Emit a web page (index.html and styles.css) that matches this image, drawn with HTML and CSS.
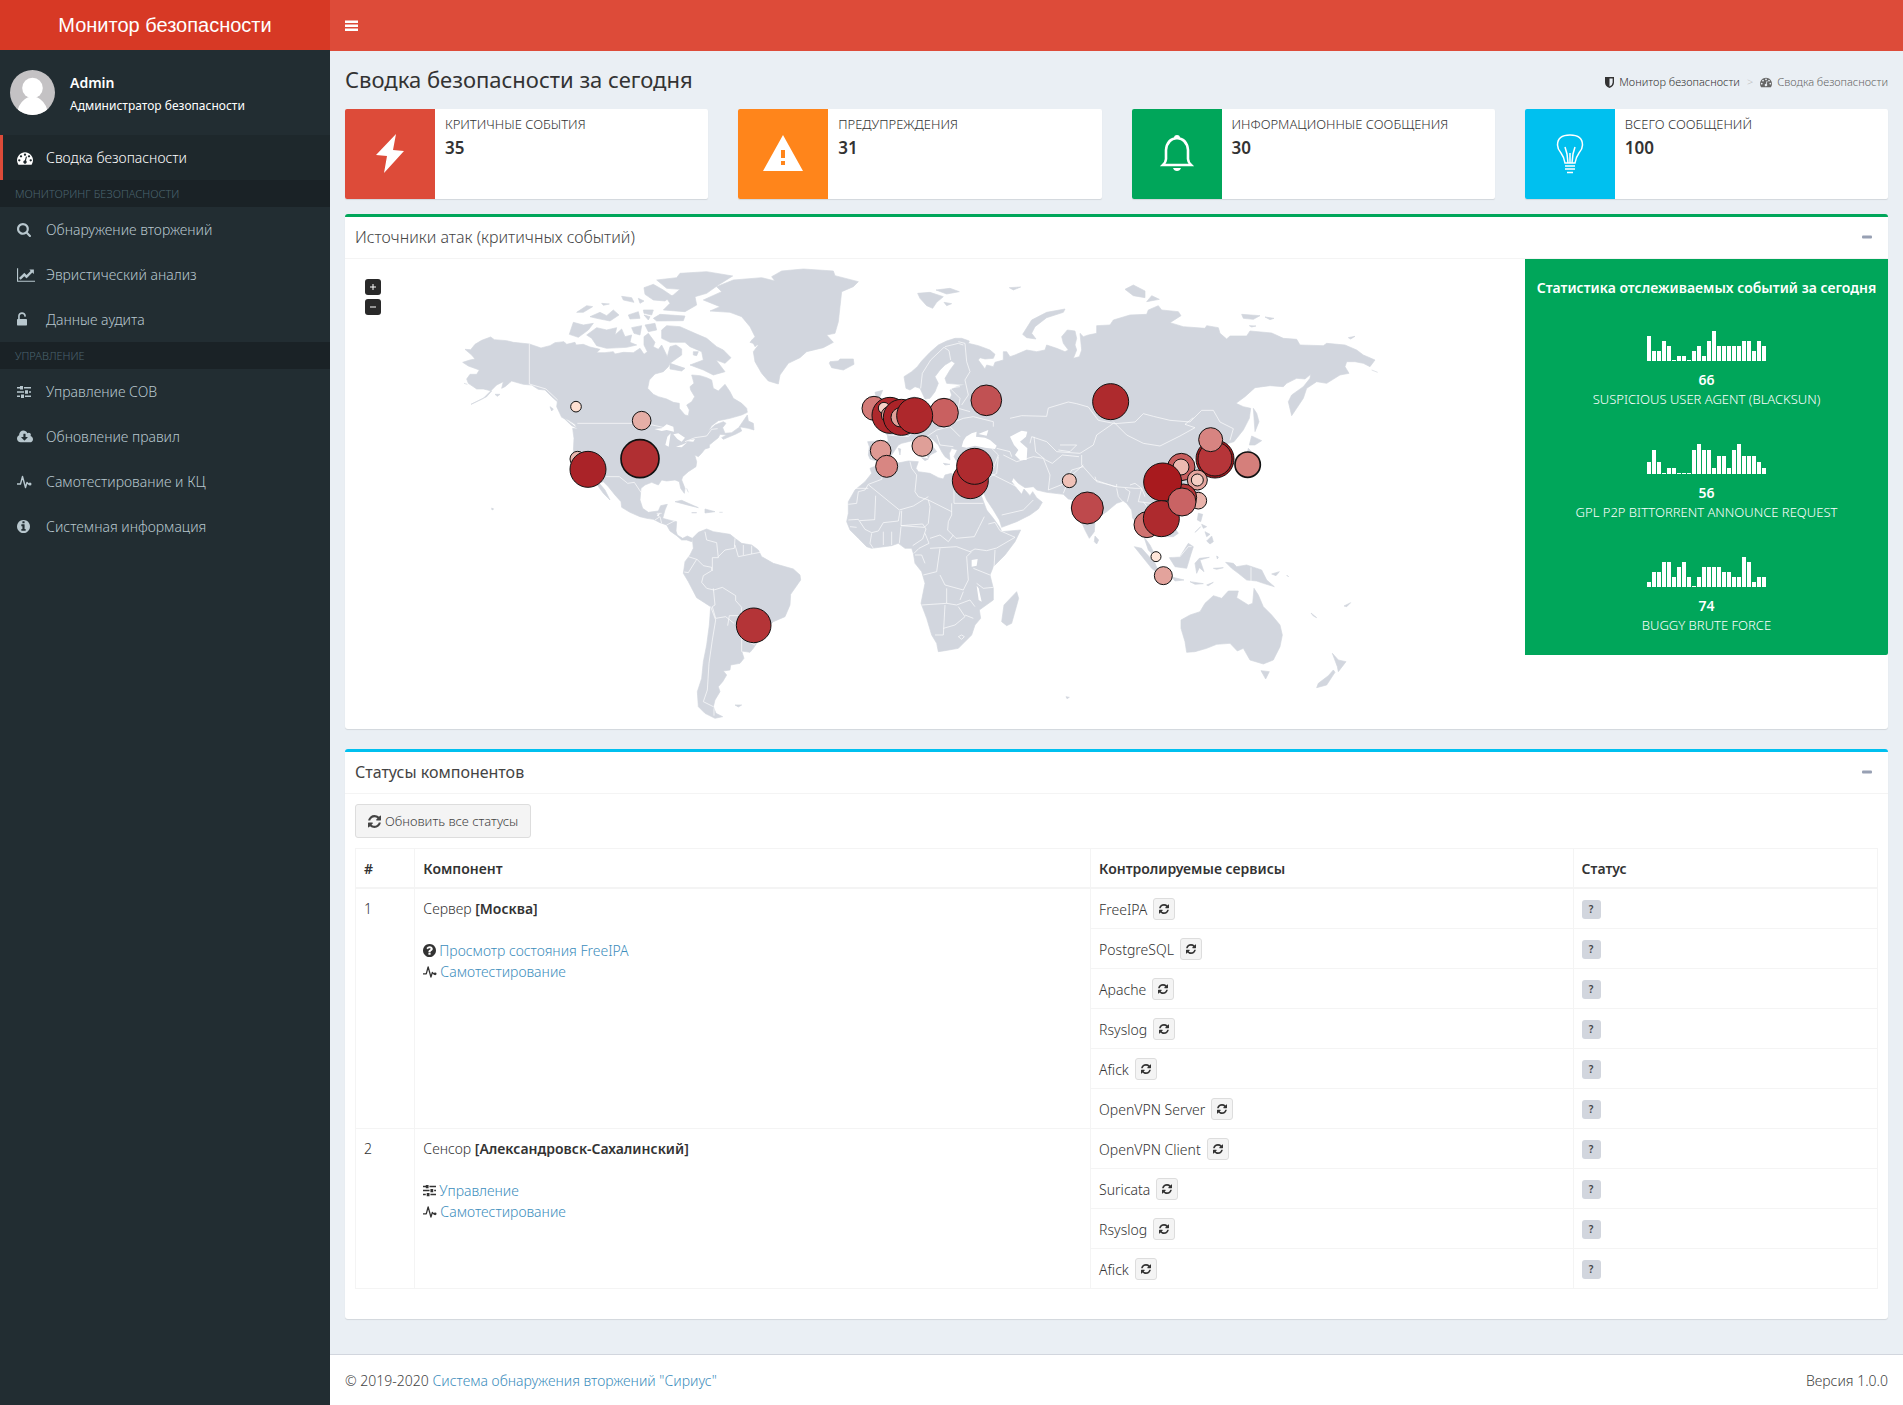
FILE: index.html
```html
<!DOCTYPE html>
<html lang="ru">
<head>
<meta charset="utf-8">
<title>Монитор безопасности</title>
<link rel="stylesheet" href="styles.css">
</head>
<body>
<svg class="sprite" aria-hidden="true">
  <symbol id="i-bars" viewBox="0 0 14 14"><path d="M0 1.500h13v2.500H0zM0 5.500h13V8H0zM0 9.500h13V12H0z"/></symbol>
  <symbol id="i-dash" viewBox="0 0 1792 1792"><path d="M384 1152q0-53-37.500-90.500t-90.500-37.500-90.500 37.500-37.500 90.500 37.500 90.500 90.500 37.500 90.500-37.500 37.500-90.500zm192-448q0-53-37.500-90.500t-90.500-37.500-90.500 37.500-37.500 90.500 37.500 90.500 90.500 37.500 90.500-37.500 37.500-90.500zm428 481l101-382q6-26-7.500-48.500t-38.500-29.500-48 6.500-30 39.500l-101 382q-60 5-107 43.500t-63 98.500q-20 77 20 146t117 89 146-20 89-117q16-60-6-117t-72-91zm660-33q0-53-37.500-90.500t-90.500-37.500-90.500 37.500-37.500 90.500 37.500 90.500 90.500 37.500 90.500-37.500 37.500-90.500zm-640-640q0-53-37.500-90.500t-90.500-37.500-90.500 37.500-37.500 90.500 37.500 90.500 90.500 37.500 90.500-37.500 37.500-90.500zm448 192q0-53-37.500-90.500t-90.500-37.500-90.500 37.500-37.500 90.500 37.500 90.500 90.500 37.500 90.500-37.500 37.500-90.500zm320 448q0 261-141 483-19 29-54 29h-1402q-35 0-54-29-141-221-141-483 0-182 71-348t191-286 286-191 348-71 348 71 286 191 191 286 71 348z"/></symbol>
  <symbol id="i-search" viewBox="64 128 1664 1664"><path d="M1216 832q0-185-131.500-316.500t-316.500-131.500-316.500 131.500-131.500 316.500 131.500 316.500 316.500 131.500 316.500-131.500 131.500-316.500zm512 832q0 52-38 90t-90 38q-54 0-90-38l-343-342q-179 124-399 124-143 0-273.500-55.500t-225-150-150-225-55.500-273.500 55.500-273.500 150-225 225-150 273.500-55.500 273.500 55.500 225 150 150 225 55.500 273.500q0 220-124 399l343 343q37 37 37 90z"/></symbol>
  <symbol id="i-chart" viewBox="0 0 2048 1792"><path d="M2048 1536v128h-2048v-1536h128v1408h1920zm-128-1248v435q0 21-19.500 29.500t-35.500-7.500l-121-121-633 633q-10 10-23 10t-23-10l-233-233-416 416-192-192 585-585q10-10 23-10t23 10l233 233 464-464-121-121q-16-16-7.500-35.500t29.500-19.500h435q14 0 23 9t9 23z"/></symbol>
  <symbol id="i-unlock" viewBox="320 0 1152 1792"><path d="M1376 768q40 0 68 28t28 68v576q0 40-28 68t-68 28h-960q-40 0-68-28t-28-68v-576q0-40 28-68t68-28h32v-320q0-185 131.500-316.500t316.500-131.500 316.500 131.500 131.500 316.500q0 26-19 45t-45 19h-64q-26 0-45-19t-19-45q0-106-75-181t-181-75-181 75-75 181v320h736z"/></symbol>
  <symbol id="i-sliders" viewBox="0 0 14 14"><path d="M0 2h3v1.500H0zM3 1h3v3.500H3zM7 2h7v1.500H7zM0 6.300h7v1.500H0zM8 5.300h3v3.500H8zM12 6.300h2v1.500h-2zM0 10.600h3v1.500H0zM4 9.600h3v3.500H4zM8 10.600h6v1.500H8z"/></symbol>
  <symbol id="i-cloud" viewBox="0 0 1920 1792"><path d="M1280 928q0-14-9-23t-23-9h-224v-352q0-13-9.500-22.500t-22.500-9.500h-192q-13 0-22.500 9.500t-9.500 22.500v352h-224q-13 0-22.500 9.500t-9.500 22.500q0 14 9 23l352 352q9 9 23 9t23-9l351-351q10-12 10-24zm640 224q0 159-112.500 271.500t-271.500 112.500h-1088q-185 0-316.500-131.500t-131.500-316.500q0-130 70-240t188-165q-2-30-2-43 0-212 150-362t362-150q156 0 285.500 87t188.500 231q71-62 166-62 106 0 181 75t75 181q0 76-41 138 130 31 213.500 135.500t83.500 238.500z"/></symbol>
  <symbol id="i-pulse" viewBox="0 0 15 14"><path d="M0 9h3.500L5.500 1.500 8.500 12.500 10 7.500 11.500 9H13" fill="none" stroke="currentColor" stroke-width="1.400" stroke-linejoin="round"/><circle cx="13" cy="9" r="1.500"/></symbol>
  <symbol id="i-info" viewBox="128 128 1536 1536"><path d="M1152 1376v-160q0-14-9-23t-23-9h-96v-512q0-14-9-23t-23-9h-320q-14 0-23 9t-9 23v160q0 14 9 23t23 9h96v320h-96q-14 0-23 9t-9 23v160q0 14 9 23t23 9h448q14 0 23-9t9-23zm-128-896v-160q0-14-9-23t-23-9h-192q-14 0-23 9t-9 23v160q0 14 9 23t23 9h192q14 0 23-9t9-23zm640 416q0 209-103 385.500t-279.500 279.500-385.500 103-385.500-103-279.500-279.500-103-385.500 103-385.500 279.500-279.500 385.500-103 385.500 103 279.500 279.500 103 385.500z"/></symbol>
  <symbol id="i-question" viewBox="128 128 1536 1536"><path d="M1024 1376v-192q0-14-9-23t-23-9h-192q-14 0-23 9t-9 23v192q0 14 9 23t23 9h192q14 0 23-9t9-23zm256-672q0-88-55.500-163t-138.500-116-170-41q-243 0-371 213-15 24 8 42l132 100q7 6 19 6 16 0 25-12 53-68 86-92 34-24 86-24 48 0 85.500 26t37.500 59q0 38-20 61t-68 45q-63 28-115.500 86.500t-52.500 125.500v36q0 14 9 23t23 9h192q14 0 23-9t9-23q0-19 21.500-49.500t54.500-49.500q32-18 49-28.500t46-35 44.500-48 28-60.500 12.500-81zm384 192q0 209-103 385.500t-279.500 279.500-385.500 103-385.500-103-279.500-279.500-103-385.500 103-385.500 279.500-279.500 385.500-103 385.500 103 279.500 279.500 103 385.500z"/></symbol>
  <symbol id="i-refresh" viewBox="128 128 1536 1536"><path d="M1639 1056q0 5-1 7-64 268-268 434.500t-478 166.500q-146 0-282.500-55t-243.500-157l-129 129q-19 19-45 19t-45-19-19-45v-448q0-26 19-45t45-19h448q26 0 45 19t19 45-19 45l-137 137q71 66 161 102t187 36q134 0 250-65t186-179q11-17 53-117 8-23 30-23h192q13 0 22.500 9.500t9.500 22.500zm25-800v448q0 26-19 45t-45 19h-448q-26 0-45-19t-19-45 19-45l138-138q-148-137-349-137-134 0-250 65t-186 179q-11 17-53 117-8 23-30 23h-199q-13 0-22.500-9.500t-9.500-22.500v-7q65-268 270-434.500t480-166.500q146 0 284 55.500t245 156.500l130-129q19-19 45-19t45 19 19 45z"/></symbol>
  <symbol id="i-shield" viewBox="0 0 10 12"><path fill-rule="evenodd" d="M0 0h10v6q0 4-5 6Q0 10 0 6zM5 1.500v9Q8.500 8.800 8.500 6V1.500z"/></symbol>
  <symbol id="i-minus" viewBox="0 0 10 10"><path d="M0 4.500q0-1 1-1h8q1 0 1 1v1q0 1-1 1H1q-1 0-1-1z"/></symbol>
</svg>

<header class="topbar">
  <a class="logo" href="#">Монитор безопасности</a>
  <div class="navbar"><button class="toggle" type="button" aria-label="Меню"><svg class="ic14"><use href="#i-bars"/></svg></button></div>
</header>

<div class="layout">
<aside class="sidebar">
  <div class="user">
    <svg class="avatar" viewBox="0 0 45 45"><clipPath id="av"><circle cx="22.500" cy="22.500" r="22.500"/></clipPath><g clip-path="url(#av)"><path fill="#c4c2c4" d="M0 0h45v45H0z"/><circle cx="22.500" cy="18" r="10.300" fill="#fff"/><path fill="#fff" d="M7 46q0-11 8-17 2.500-2 5-2h5q2.500 0 5 2 8 6 8 17z"/></g></svg>
    <div><p class="user-name">Admin</p><p class="user-role">Администратор безопасности</p></div>
  </div>
  <nav class="menu">
    <a class="active" href="#"><svg class="ic16"><use href="#i-dash"/></svg><span>Сводка безопасности</span></a>
    <h2>Мониторинг безопасности</h2>
    <a href="#"><svg class="ic14"><use href="#i-search"/></svg><span>Обнаружение вторжений</span></a>
    <a href="#"><svg class="ic18"><use href="#i-chart"/></svg><span>Эвристический анализ</span></a>
    <a href="#"><svg class="ic10"><use href="#i-unlock"/></svg><span>Данные аудита</span></a>
    <h2>Управление</h2>
    <a href="#"><svg class="ic14"><use href="#i-sliders"/></svg><span>Управление СОВ</span></a>
    <a href="#"><svg class="ic16"><use href="#i-cloud"/></svg><span>Обновление правил</span></a>
    <a href="#"><svg class="ic15"><use href="#i-pulse"/></svg><span>Самотестирование и КЦ</span></a>
    <a href="#"><svg class="ic13"><use href="#i-info"/></svg><span>Системная информация</span></a>
  </nav>
</aside>

<div class="page">
<main class="content">
  <div class="page-head">
    <h1>Сводка безопасности за сегодня</h1>
    <nav class="crumbs"><a href="#"><svg class="ic-shield"><use href="#i-shield"/></svg>Монитор безопасности</a><i>&gt;</i><span><svg class="ic12"><use href="#i-dash"/></svg>Сводка безопасности</span></nav>
  </div>

  <section class="cards">
    <article class="card"><div class="card-icon red"><svg viewBox="0 0 90 90"><path d="M51 25 31 46l11 1-3 17 20-22-11-1z"/></svg></div><div class="card-text"><p>Критичные события</p><b>35</b></div></article>
    <article class="card"><div class="card-icon orange"><svg viewBox="0 0 90 90"><path fill-rule="evenodd" d="M45 26 65 62H25zM43 41v8h4v-8zM43 52v4h4v-4z"/></svg></div><div class="card-text"><p>Предупреждения</p><b>31</b></div></article>
    <article class="card"><div class="card-icon green"><svg viewBox="0 0 90 90"><path d="M42 29q0-3 3-3t3 3zM41 59h8q-1 3-4 3t-4-3z"/><path fill="none" stroke="#fff" stroke-width="2.600" d="M45 29q-10 1-11 12v9q0 3-3 6h28q-3-3-3-6v-9q-1-11-11-12z"/></svg></div><div class="card-text"><p>Информационные сообщения</p><b>30</b></div></article>
    <article class="card"><div class="card-icon aqua"><svg viewBox="0 0 90 90"><path fill="none" stroke="#fff" stroke-width="1.500" d="M40 54q-1-6-4-10-3.500-4-3.500-8 0-10 12.500-10t12.500 10q0 4-3.500 8-3 4-4 10zM43 54l-1-9-2-7M47 54l1-9 2-7M45 54V44M40 57h10M40 60h10M42 63.500h6"/></svg></div><div class="card-text"><p>Всего сообщений</p><b>100</b></div></article>
  </section>

  <section class="box box-green">
    <header class="box-head"><h3 class="light">Источники атак (критичных событий)</h3><button type="button" aria-label="Свернуть"><svg class="ic10"><use href="#i-minus"/></svg></button></header>
    <div class="map-row">
      <div class="map">
        <div class="zoom"><button type="button" aria-label="Приблизить"><svg viewBox="0 0 16 16"><path d="M5 7.500h6v1H5zM7.500 5h1v6h-1z"/></svg></button><button type="button" aria-label="Отдалить"><svg viewBox="0 0 16 16"><path d="M5 7.500h6v1H5z"/></svg></button></div>
        <svg class="world" viewBox="345 259 1180 470" role="img" aria-label="Карта источников атак">
          <g class="land" transform="translate(440 255) scale(.33333)">
            <path d="M75 283L92 284 105 268 125 256 152 246 163 254 200 257 220 262 268 267 303 279 330 272 345 263 372 260 380 268 405 262 408 270 430 268 450 276 480 283 470 293 495 293 520 290 525 297 550 292 580 293 600 280 612 298 622 290 612 270 612 245 625 235 645 262 640 275 655 283 665 270 675 290 682 305 690 275 708 270 725 282 725 300 708 312 690 325 685 335 670 350 645 357 628 375 623 400 640 418 655 425 680 432 700 442 718 445 718 460 735 480 745 482 748 465 740 450 755 440 764 425 752 405 750 395 762 385 755 360 780 362 800 368 815 375 820 400 835 408 855 388 870 410 880 430 905 445 920 460 922 472 905 480 870 490 835 497 815 512 805 528 825 510 850 500 858 505 848 518 855 535 875 533 900 515 905 528 888 537 850 553 845 548 860 540 840 538 835 548 820 560 808 570 808 578 795 582 785 595 775 605 764 600 770 620 768 635 745 650 728 665 725 675 735 700 733 715 722 700 718 680 705 675 680 678 665 675 655 690 635 682 615 690 603 700 600 735 608 760 625 772 655 768 662 752 682 748 675 765 668 790 695 797 710 800 708 828 712 840 728 850 742 843 757 850 755 860 740 855 725 855 710 842 690 828 680 810 660 803 640 793 620 790 600 785 570 772 545 757 543 740 525 720 505 695 490 680 478 685 495 705 510 735 490 715 472 690 460 680 450 660 420 640 402 610 400 590 402 550 398 520 412 522 405 508 385 495 365 487 350 455 352 440 335 425 315 405 295 403 275 390 250 388 215 378 195 395 185 400 190 380 170 390 150 410 130 430 93 448 140 425 155 408 130 402 110 402 85 385 80 372 90 358 110 358 118 345 85 333 68 322 90 315 105 312 95 300z"/>
            <path d="M790 135L845 110 830 95 880 75 965 68 1005 78 995 65 1025 48 1090 42 1180 48 1185 62 1255 80 1240 95 1205 110 1200 155 1195 200 1185 235 1160 240 1180 262 1150 278 1100 290 1080 308 1045 325 1020 360 1015 387 985 378 965 355 945 320 940 290 955 270 930 262 945 245 930 215 905 185 870 172 810 168 840 155z"/>
            <path d="M650 75L710 68 720 55 800 50 878 63 835 90 800 115 765 125 770 150 735 170 670 165 690 145 680 130 700 120 720 103 680 100zM612 98L640 88 670 105 695 122 675 138 640 135 615 118zM388 238L400 202 430 210 460 205 445 225 415 247zM440 240L470 218 500 225 530 218 525 240 545 222 555 245 575 240 570 262 590 270 560 277 500 280 470 272 455 250zM665 225L680 212 720 215 765 235 800 250 830 275 850 285 873 308 855 325 828 315 855 350 820 360 790 345 750 330 790 315 785 290 750 275 735 262 690 262 665 250zM640 190L660 178 735 183 730 197 650 198zM450 185L480 172 500 182 520 165 537 180 510 198 470 190zM410 172L440 152 458 155 430 172zM565 180L595 170 600 190 570 192zM575 218L605 212 600 240 582 235zM545 124L575 128 582 142 550 135zM485 145L508 147 490 151zM615 210L645 205 650 225 625 230zM610 165L640 165 635 180 612 175zM595 130L612 138 600 145zM690 325L735 340 725 348 690 342zM760 290L775 290 770 302 760 300zM612 180L630 185 625 195z"/>
            <path d="M898 515L922 480 925 498 940 505 942 525 925 520zM705 740L725 736 775 758 750 752zM795 762L825 770 795 774zM755 773L770 773zM838 772L848 772M165 418L180 418 172 424zM330 455L340 462 335 468zM740 700L745 712M155 759L161 762 156 765zM885 1350L905 1350 895 1356zM370 488L412 520 395 512zM72 385L82 388M935 255L960 262 945 275z"/>
            <path d="M757 850L775 832 800 822 820 830 870 838 885 850 905 865 935 870 955 885 965 905 1000 925 1060 942 1080 960 1082 975 1052 1018 1050 1050 1035 1085 1000 1100 980 1120 960 1150 940 1180 930 1192 905 1188 912 1210 900 1225 872 1230 870 1245 850 1248 860 1260 848 1280 835 1295 840 1310 825 1335 820 1355 828 1375 848 1385 825 1390 795 1375 775 1355 772 1310 785 1270 790 1220 800 1170 808 1110 812 1055 770 1028 745 980 730 955 735 920 750 900 760 880z"/>
          </g>
          <g class="land" transform="translate(830 255) scale(.33333)">
            <path d="M222 365L245 350 262 335 275 318 300 292 325 270 350 258 375 250 395 250 418 258 415 265 445 272 480 285 495 298 490 310 465 312 450 308 445 315 465 342 470 330 490 335 495 322 520 315 520 290 530 290 540 305 555 300 590 285 620 290 645 285 650 270 680 280 705 290 715 285 700 265 695 245 712 225 735 228 740 250 735 270 740 285 730 310 748 305 755 285 750 235 760 245 775 240 800 235 800 212 840 210 850 195 900 180 950 178 955 165 985 152 995 165 1045 170 1053 182 1020 203 1060 215 1125 220 1130 212 1165 218 1170 235 1190 252 1200 243 1250 243 1260 228 1325 234 1360 250 1400 253 1410 270 1480 272 1490 265 1545 270 1580 285 1600 300 1635 315 1620 335 1600 325 1575 320 1550 320 1545 335 1557 355 1530 360 1490 385 1460 380 1430 400 1420 430 1400 460 1385 482 1375 440 1385 420 1420 395 1440 370 1442 358 1425 372 1400 370 1370 385 1360 395 1320 392 1275 398 1245 425 1218 445 1240 455 1262 460 1258 490 1240 525 1212 560 1195 565 1185 575 1195 600 1200 640 1175 640 1165 610 1130 590 1105 595 1085 620 1095 635 1120 640 1095 660 1105 690 1110 715 1100 750 1075 775 1040 780 1010 775 1020 800 1045 835 1030 845 1005 845 985 835 960 830 945 850 960 870 970 890 975 905 955 885 945 855 935 820 920 800 908 790 905 765 890 745 880 738 860 745 830 770 815 780 795 800 793 830 778 850 765 825 750 790 740 750 735 735 715 732 700 718 650 712 620 705 610 695 585 698 565 685 550 668 545 680 560 700 575 718 582 702 600 722 608 710 620 728 637 742 625 762 600 780 560 800 515 817 508 795 490 765 470 735 455 700 462 660 468 645 440 640 410 635 385 628 372 605 382 585 365 580 358 595 360 615 345 605 335 590 325 570 310 555 295 545 290 552 305 570 320 590 300 600 295 610 288 590 270 570 255 555 235 560 215 565 205 570 195 585 185 600 180 615 155 620 140 618 120 612 115 600 118 575 113 560 150 558 175 560 172 540 150 520 175 505 200 490 230 470 235 445 230 432 255 425 262 450 290 455 330 445 355 440 365 420 360 405 380 395 405 388 385 388 350 385 345 370 360 345 375 325 365 318 345 330 330 345 315 365 325 385 315 410 300 430 285 432 270 400 255 395 240 405 228 400z"/>
            <path d="M120 640L140 632 170 640 200 625 235 618 265 620 258 640 265 650 300 655 325 668 340 672 345 660 365 655 380 675 440 690 455 725 470 765 490 790 510 818 515 830 572 825 555 860 525 900 490 935 480 960 490 1000 490 1035 448 1065 452 1090 435 1110 425 1140 385 1180 345 1187 325 1190 320 1165 305 1140 290 1090 273 1045 285 985 275 950 255 925 250 895 245 880 225 880 205 865 185 872 125 880 110 875 85 850 60 825 50 800 55 775 55 740 75 705 105 680 125 655z"/>
            <path d="M560 1010L566 1030 545 1105 530 1112 515 1100 522 1050zM795 843L806 855 800 867 793 860zM135 412L158 406 150 425 175 470 190 495 155 500 160 480 145 455zM110 445L130 455 125 480 105 485zM0 320L25 318 30 312 70 312 72 328 40 345 5 338 -2 325zM263 115L300 112 340 125 320 142 308 160 290 152 270 130zM318 105L360 100 388 110 350 117zM342 142L365 146 350 152zM538 98L572 96 550 105zM578 238L605 195 650 172 705 162 700 172 650 188 615 215 605 235 618 252 590 248zM885 103L910 90 945 108 945 128 910 122zM950 140L965 122 988 133zM275 608L295 612 285 617zM205 580L212 582 210 600zM340 625L360 628 345 630zM440 650L455 645M708 1325L718 1327 711 1331z"/>
          </g>
          <g class="land" transform="translate(1080 255) scale(.33333)">
            <path d="M485 178L540 182 520 193 490 190zM555 186L582 190 570 194zM508 212L528 213 515 216zM805 248L825 244 812 252zM520 460L530 475 537 500 525 530zM515 543L545 557 525 570 508 570zM505 580L515 590 500 600zM875 345L893 352"/>
            <path d="M303 1095L330 1080 360 1070 375 1045 400 1022 425 1030 445 1008 475 1008 470 1028 505 1050 518 1045 522 1000 535 1020 550 1055 575 1080 600 1110 607 1140 600 1175 580 1215 550 1227 510 1215 490 1180 472 1188 450 1165 410 1168 380 1180 345 1190 320 1192 315 1160 303 1120zM543 1247L568 1250 557 1272zM757 1195L775 1215 798 1220 775 1250 772 1235zM760 1245L765 1252 740 1290 710 1298 715 1285 745 1262z"/>
            <path d="M437 922L460 925 470 935 500 930 545 945 560 975 583 995 550 985 530 978 500 975 475 955 455 940zM268 908L300 905 325 865 340 875 332 900 320 940 285 935zM163 875L185 880 225 925 240 960 215 940zM275 966L312 975 285 978zM345 925L358 910 388 907 360 915 372 950 358 938 350 955zM355 775L368 778 362 800 352 795zM380 858L395 843 400 860 390 867zM365 808L380 815 370 820zM375 830L390 838 380 845zM410 903L415 906 412 912zM330 980L370 986 345 988zM380 990L400 982 385 992zM575 957L598 950 588 962zM620 960L626 966zM693 1074L710 1088 700 1083zM792 1053L812 1043 800 1055zM400 940L430 938 410 943zM345 832L362 815 350 828z"/>
          </g>
          <g class="water" transform="translate(440 255) scale(.33333)"><path d="M643 522L665 520 680 508 700 515 702 530 680 525 665 528zM682 545L692 535 686 575 676 570zM700 538L715 535 735 548 725 560 712 552zM708 575L730 568 742 562 725 577zM738 558L765 552 760 560zM650 780L660 775 655 785z"/></g>
          <g class="water" transform="translate(830 255) scale(.33333)"><path d="M540 545L575 527 592 530 588 545 570 560 592 580 590 615 570 615 555 600 565 585 552 570zM408 545L425 535 440 530 438 545 465 548 480 555 500 572 495 582 465 578 435 572 410 578 395 575 400 558zM445 537L475 525 470 542zM425 915L443 912 440 932 425 935zM440 992L446 1000 455 1040 446 1035z"/></g>
          <g class="border" transform="translate(440 255) scale(.33333)"><path d="M268 267v120l50 15 35 33M412 505h165M577 505l60 5 45 10M735 560l30-12 35-5 15-20 18-2M498 665l40 0 25 20 20-3 20 30M650 775l15 0M645 795l15-10 5 20M680 810l25-13M795 830l5 25 30 8 5 45-18 0 0 40M885 850l-2 30-28 5-20 20M885 870l10 35 40-8 25-5M910 870v30M935 872v25M745 905l25 8-25 40-12-2M770 912l20 20 25 5v10l-25 15-5 20 15 18 22 5 25-8 40 25 0 15 18 20-2 25-35 0-5 30M820 1000l5 50-8 5 10 35 30-5 25 20M812 1055l15 40-10 60-10 70-5 80-12 35 30 15M905 1190l0-40 20 10 20 10M822 1360v22"/></g>
          <g class="border" transform="translate(830 255) scale(.33333)">
            <path d="M158 655l-3 18-40 15-10 17-20 5-5 35-25 3M116 690l92 75 42-12 45-28M137 722l-3 72-45 3M240 620l5 20 15 20-5 50 10 15 30 10 70 35M372 670v75h88M365 745v35l-10 20-2 25 15 15 10 10 55-5 15-30 15-30M295 735l5 20-5 50-12 12-70-5 2-45M213 815l-5 50M213 812l65-5 10 15-10 30-30 20M300 850l30-10 25 20 15-20M285 835l12 30-30 15-15 15M300 880l80-5 40 15 15-8 35 5 30-8 55-32-45-20-15-25-20 5M330 880l-10 70-40 10M330 960l15 30 55 15 15-30-5-70 15-15M350 1000v45l-75 5M350 1045l30 5 40-15 15 20M345 1050l-5 90-25 0M340 1120l35-10 30-25-20-30M385 1145l10 8 8-8-8-5zM440 985l20 15 30-3M495 885l-3 55M400 1010l-10 25M405 1080l25 10M55 795l30-2 20 30 20 10 20-5 15-25 45-5 5-30M160 830v40M185 830v40M125 835l-5 30 10 15M60 815l20 2M75 700h40M255 900l20 0 10 25M430 940l50 20"/>
            <path d="M540 490l35-8 75 2 5-25 60-18 25 5 35 10 30 40 50 10 60-5 25-25 30 8 50 12 60 5 35-35h35l20 35 40 20-10 35M850 500l40 40 50 25 50 8 60-30 45-25-30-10 25-20M850 505l-50 35-10 30-40 25-70-5-30-30-45-15-5 20M612 545l5 45 30 25 20 10 30-25 50 5M690 570l50 0-20 20-35-5M520 600l40 20 50-15 30 5 20 50-5 45 50-20 20-40 35-10M700 715l20-50 40-35M755 600v30l40 45 60 20 60 5 20 0 10 25M795 665l5 15 60 15v-8M860 700l5 25 18 20M885 700l15 10-8 30M900 690l15-5 20 15-10 40 40 5M940 740l15 20 30-5 15 40M395 450l20-30-10-45 15-25-10-30-5-55-20-5M360 400l30 30-5 30 35 10M310 500l40 10 50-20 30-5 60 15 0 15M490 640l15-40-20-20M470 650l40 20 50 25M515 780l65-15 30-30M470 670l30-15 5-50M272 400l5-45 25-40 40-38 15 10 5 28M345 275l40-10 15 5M345 400l45-5M290 545l30-20 40-10 30 30M320 540l10 30 40 5M175 540l60 5 20-20M125 570l0 40M1330 600"/>
            <path d="M500 580l40 10 5 15M1025 905l25 0 25-30 10 0M1263 937v45"/>
          </g>
          <g class="pins">
            <g transform="translate(440 255) scale(.33333)">
              <circle cx="408" cy="455" r="16" fill="#fee0d2"/><circle cx="605" cy="497" r="28" fill="#e5aea6"/><circle cx="413" cy="612" r="23" fill="#e9b6ae"/><circle cx="444" cy="643" r="54" fill="#aa2328"/><circle cx="600" cy="611" r="57" fill="#b02f32" class="thick"/><circle cx="941" cy="1111" r="52" fill="#b43437"/>
            </g>
            <g transform="translate(830 255) scale(.33333)">
              <circle cx="132" cy="460" r="36" fill="#d37b78"/><circle cx="180" cy="481" r="54" fill="#ae282c"/><circle cx="162" cy="459" r="17" fill="#f7d0c6"/><circle cx="180" cy="480" r="26" fill="#df9f98"/><circle cx="214" cy="487" r="54" fill="#ab2328"/><circle cx="212" cy="487" r="29" fill="#df9f98"/><circle cx="342" cy="473" r="43" fill="#c96060"/><circle cx="254" cy="482" r="54" fill="#ae282c"/><circle cx="469" cy="436" r="46" fill="#c15153"/><circle cx="842" cy="440" r="54" fill="#ae2a2d"/>
              <circle cx="152" cy="587" r="31" fill="#df9993"/><circle cx="170" cy="634" r="33" fill="#d88682"/><circle cx="277" cy="573" r="31" fill="#df9f98"/><circle cx="421" cy="677" r="54" fill="#b22e32"/><circle cx="434" cy="634" r="54" fill="#ae2b2f"/>
              <circle cx="718" cy="677" r="21" fill="#efc1b7"/><circle cx="772" cy="759" r="48" fill="#be494c"/>
              <circle cx="1155" cy="612" r="57" fill="#a6171c"/><circle cx="1155" cy="612" r="51" fill="#b63539"/><circle cx="1142" cy="554" r="36" fill="#d78481"/><circle cx="1054" cy="636" r="41" fill="#c65d5d"/><circle cx="1053" cy="636" r="24" fill="#ecb9b0"/><circle cx="1102" cy="675" r="30" fill="#e4a49d"/><circle cx="1102" cy="675" r="18" fill="#f4cdc3"/><circle cx="1105" cy="737" r="25" fill="#e9b3ab"/><circle cx="1060" cy="727" r="40" fill="#b43437"/><circle cx="998" cy="681" r="57" fill="#a81a1e"/><circle cx="951" cy="809" r="39" fill="#cf7270"/><circle cx="994" cy="791" r="54" fill="#ae2a2e"/><circle cx="1056" cy="741" r="42" fill="#c96364"/><circle cx="978" cy="905" r="15" fill="#fee5d9"/><circle cx="1000" cy="962" r="27" fill="#e3a39c"/><circle cx="1253" cy="629" r="38" fill="#d57f7b" class="thick"/>
            </g>
          </g>
        </svg>
      </div>
      <aside class="stats">
        <h4>Статистика отслеживаемых событий за сегодня</h4>
        <div class="stat"><svg class="spark" viewBox="0 0 119 30"><path d="M2 30v-25M7 30v-10M12 30v-10M17 30v-20M22 30v-15M27 30v-1M32 30v-5M37 30v-5M42 30v-1M47 30v-10M52 30v-15M57 30v-5M62 30v-20M67 30v-30M72 30v-15M77 30v-15M82 30v-15M87 30v-15M92 30v-15M97 30v-20M102 30v-20M107 30v-10M112 30v-20M117 30v-15"/></svg><b>66</b><p>SUSPICIOUS USER AGENT (BLACKSUN)</p></div>
        <div class="stat"><svg class="spark" viewBox="0 0 119 30"><path d="M2 30v-12M7 30v-24M12 30v-12M17 30v-1M22 30v-6M27 30v-6M32 30v-1M37 30v-1M42 30v-1M47 30v-24M52 30v-30M57 30v-24M62 30v-24M67 30v-6M72 30v-18M77 30v-18M82 30v-6M87 30v-24M92 30v-30M97 30v-18M102 30v-18M107 30v-18M112 30v-12M117 30v-6"/></svg><b>56</b><p>GPL P2P BITTORRENT ANNOUNCE REQUEST</p></div>
        <div class="stat"><svg class="spark" viewBox="0 0 119 30"><path d="M2 30v-5M7 30v-15M12 30v-15M17 30v-25M22 30v-25M27 30v-10M32 30v-20M37 30v-25M42 30v-10M47 30v-1M52 30v-10M57 30v-20M62 30v-20M67 30v-20M72 30v-20M77 30v-15M82 30v-15M87 30v-10M92 30v-10M97 30v-30M102 30v-25M107 30v-5M112 30v-10M117 30v-10"/></svg><b>74</b><p>BUGGY BRUTE FORCE</p></div>
      </aside>
    </div>
  </section>

  <section class="box box-aqua">
    <header class="box-head"><h3>Статусы компонентов</h3><button type="button" aria-label="Свернуть"><svg class="ic10"><use href="#i-minus"/></svg></button></header>
    <div class="box-body">
      <button class="btn" type="button"><svg class="ic13"><use href="#i-refresh"/></svg>Обновить все статусы</button>
      <table class="grid">
        <colgroup><col class="c-num"><col class="c-comp"><col class="c-serv"><col></colgroup>
        <thead><tr><th>#</th><th>Компонент</th><th>Контролируемые сервисы</th><th>Статус</th></tr></thead>
        <tbody>
          <tr><td rowspan="6">1</td><td rowspan="6">Сервер <b>[Москва]</b><div class="links"><span><svg class="ic13"><use href="#i-question"/></svg><a href="#">Просмотр состояния FreeIPA</a></span><span><svg class="ic14"><use href="#i-pulse"/></svg><a href="#">Самотестирование</a></span></div></td><td><div class="svc">FreeIPA<button type="button" aria-label="Обновить"><svg class="ic10"><use href="#i-refresh"/></svg></button></div></td><td><span class="badge">?</span></td></tr>
          <tr><td><div class="svc">PostgreSQL<button type="button" aria-label="Обновить"><svg class="ic10"><use href="#i-refresh"/></svg></button></div></td><td><span class="badge">?</span></td></tr>
          <tr><td><div class="svc">Apache<button type="button" aria-label="Обновить"><svg class="ic10"><use href="#i-refresh"/></svg></button></div></td><td><span class="badge">?</span></td></tr>
          <tr><td><div class="svc">Rsyslog<button type="button" aria-label="Обновить"><svg class="ic10"><use href="#i-refresh"/></svg></button></div></td><td><span class="badge">?</span></td></tr>
          <tr><td><div class="svc">Afick<button type="button" aria-label="Обновить"><svg class="ic10"><use href="#i-refresh"/></svg></button></div></td><td><span class="badge">?</span></td></tr>
          <tr><td><div class="svc">OpenVPN Server<button type="button" aria-label="Обновить"><svg class="ic10"><use href="#i-refresh"/></svg></button></div></td><td><span class="badge">?</span></td></tr>
          <tr><td rowspan="4">2</td><td rowspan="4">Сенсор <b>[Александровск-Сахалинский]</b><div class="links"><span><svg class="ic13"><use href="#i-sliders"/></svg><a href="#">Управление</a></span><span><svg class="ic14"><use href="#i-pulse"/></svg><a href="#">Самотестирование</a></span></div></td><td><div class="svc">OpenVPN Client<button type="button" aria-label="Обновить"><svg class="ic10"><use href="#i-refresh"/></svg></button></div></td><td><span class="badge">?</span></td></tr>
          <tr><td><div class="svc">Suricata<button type="button" aria-label="Обновить"><svg class="ic10"><use href="#i-refresh"/></svg></button></div></td><td><span class="badge">?</span></td></tr>
          <tr><td><div class="svc">Rsyslog<button type="button" aria-label="Обновить"><svg class="ic10"><use href="#i-refresh"/></svg></button></div></td><td><span class="badge">?</span></td></tr>
          <tr><td><div class="svc">Afick<button type="button" aria-label="Обновить"><svg class="ic10"><use href="#i-refresh"/></svg></button></div></td><td><span class="badge">?</span></td></tr>
        </tbody>
      </table>
    </div>
  </section>
</main>
<footer class="footer"><p>© 2019-2020 <a href="#">Система обнаружения вторжений "Сириус"</a></p><p>Версия 1.0.0</p></footer>
</div>
</div>
</body>
</html>
```
FILE: styles.css
```css
* { box-sizing: border-box; }
body {
  margin: 0;
  min-height: 100vh;
  display: flex;
  flex-direction: column;
  font: 300 14px/21px "Noto Sans", "Open Sans", sans-serif;
  color: #333;
  background: #222d32;
}
h1, h2, h3, h4, p { margin: 0; font-weight: inherit; }
a { color: #3c8dbc; text-decoration: none; }
b { font-weight: 600; }
button { font: inherit; cursor: pointer; }
svg { fill: currentColor; flex: none; }
.sprite { position: absolute; width: 0; height: 0; }
.ic10 { width: 10px; height: 16px; }
.ic12 { width: 12px; height: 12px; }
.ic13 { width: 13px; height: 13px; }
.ic14 { width: 14px; height: 14px; }
.ic15 { width: 15px; height: 14px; }
.ic16 { width: 16px; height: 16px; }
.ic18 { width: 18px; height: 16px; }
.ic-shield { width: 9px; height: 11px; }

/* top bar */
.topbar { display: grid; grid-template-columns: 330px 1fr; background: #222d32; }
.logo {
  height: 50px;
  background: #d73925;
  color: #fff;
  font: 400 20px/50px "Liberation Sans", Arial, sans-serif;
  text-align: center;
}
.navbar { height: 51px; background: #dd4b39; display: flex; align-items: center; }
.toggle { background: none; border: 0; color: #fff; padding: 0 15px; display: flex; }

.layout { flex: 1; display: grid; grid-template-columns: 330px 1fr; }

/* sidebar */
.sidebar { background: #222d32; color: #fff; }
.user { display: flex; gap: 15px; padding: 19px 10px; }
.user > div { height: 46px; }
.avatar { width: 45px; height: 45px; }
.user-name { font-weight: 600; line-height: 26px; }
.user-role { font-size: 12px; line-height: 20px; font-weight: 400; }
.menu a {
  display: grid;
  grid-template-columns: 29px 1fr;
  align-items: center;
  height: 45px;
  padding-left: 14px;
  border-left: 3px solid transparent;
  color: #b8c7ce;
}
.menu a.active { background: #1e282c; border-color: #dd4b39; color: #fff; }
.menu h2 {
  padding: 0 15px;
  background: #1a2226;
  color: #4b646f;
  font-size: 11px;
  line-height: 27px;
  text-transform: uppercase;
}

/* content */
.page { display: flex; flex-direction: column; background: #eaeff4; min-width: 0; }
.content { flex: 1; padding: 0 15px; }
.page-head { display: flex; justify-content: space-between; height: 58px; padding-top: 14px; }
h1 { font-size: 22px; line-height: 28px; font-weight: 400; }
.crumbs { display: flex; align-items: center; gap: 7px; font-size: 11px; line-height: 16px; height: 34px; color: #666; }
.crumbs a, .crumbs span { display: flex; align-items: center; gap: 5px; }
.crumbs a { color: #333; }
.crumbs i { color: #bbb; font-style: normal; font-size: 11px; }

.cards { display: grid; grid-template-columns: repeat(4, 1fr); gap: 30px; margin-bottom: 15px; }
.card { display: flex; background: #fff; border-radius: 2px; box-shadow: 0 1px 1px rgba(0, 0, 0, .1); overflow: hidden; }
.card-icon { width: 90px; height: 90px; color: #fff; }
.card-icon svg { display: block; }
.card-text { padding: 5px 10px; }
.card-text p { font-size: 13px; line-height: 20px; text-transform: uppercase; white-space: nowrap; }
.card-text b { display: block; font-size: 17px; line-height: 28px; }
.red { background: #dd4b39; }
.orange { background: #ff851b; }
.green { background: #00a65a; }
.aqua { background: #00c0ef; }

.box { background: #fff; border-top: 3px solid; border-radius: 3px; box-shadow: 0 1px 1px rgba(0, 0, 0, .1); margin-bottom: 20px; }
.box-green { border-color: #00a65a; }
.box-aqua { border-color: #00c0ef; }
.box-head { display: flex; justify-content: space-between; align-items: center; height: 42px; padding: 0 10px 2px; border-bottom: 1px solid #f4f4f4; }
.box-head h3 { font-size: 16px; line-height: 20px; font-weight: 400; color: #444; }
.box-head h3.light { font-weight: 300; }
.box-head button { background: none; border: 0; padding: 0 6px; color: #97a0b3; display: flex; }

/* attack map */
.map-row { display: grid; grid-template-columns: minmax(0, 1180fr) minmax(0, 363fr); align-items: start; }
.map { position: relative; }
.world { display: block; width: 100%; height: auto; }
.zoom { position: absolute; left: 20px; top: 20px; display: grid; gap: 4px; }
.zoom button { width: 16px; height: 16px; padding: 0; border: 0; border-radius: 3px; background: #292929; color: #fff; }
.zoom svg { display: block; }
.land { fill: #d2d6de; stroke: #d2d6de; stroke-width: 2; }
.water { fill: #fff; }
.border { fill: none; stroke: #fff; stroke-width: 2; stroke-linejoin: round; }
.pins circle { stroke: #111; stroke-width: 3; }
.pins .thick { stroke-width: 5; }

.stats { background: #00a65a; color: #fff; text-align: center; padding: 19px 0; border-radius: 0 0 2px 0; white-space: nowrap; }
.stats h4 { font-size: 14px; line-height: 20px; font-weight: 600; margin-bottom: 33px; }
.stat { height: 113px; }
.stat:last-child { height: 79px; }
.stat b { display: block; line-height: 20px; margin-top: 9px; }
.stat p { font-size: 13px; line-height: 19px; }
.spark { display: block; width: 119px; height: 30px; margin: 0 auto; fill: none; stroke: #fff; stroke-width: 4; }

/* component statuses */
.box-body { padding: 10px 10px 30px; }
.btn { display: flex; align-items: center; gap: 4px; height: 34px; padding: 0 12px; background: #f4f4f4; border: 1px solid #ddd; border-radius: 3px; color: #444; font-size: 13px; margin-bottom: 10px; }
.grid { width: 100%; table-layout: fixed; border-collapse: collapse; }
.c-num { width: 3.9%; }
.c-comp { width: 44.4%; }
.c-serv { width: 31.7%; }
.grid th, .grid td { border: 1px solid #f4f4f4; text-align: left; vertical-align: top; padding: 9px 8px 8px; height: 40px; }
.grid th { font-weight: 600; height: 39px; border-bottom-width: 2px; }
.links { padding-top: 21px; }
.links span { display: flex; align-items: center; gap: 3px; }
.svc { display: flex; align-items: center; gap: 6px; height: 22px; }
.svc button { width: 22px; height: 22px; padding: 0; display: flex; align-items: center; justify-content: center; background: #f4f4f4; border: 1px solid #ddd; border-radius: 3px; color: #333; }
.badge { display: block; width: 19px; height: 19px; margin-top: 2px; border-radius: 3px; background: #d2d6de; color: #444; font-size: 10px; line-height: 19px; font-weight: 600; text-align: center; }

.footer { display: flex; justify-content: space-between; padding: 15px; margin-top: 15px; background: #fff; border-top: 1px solid #d2d6de; color: #444; }
```
